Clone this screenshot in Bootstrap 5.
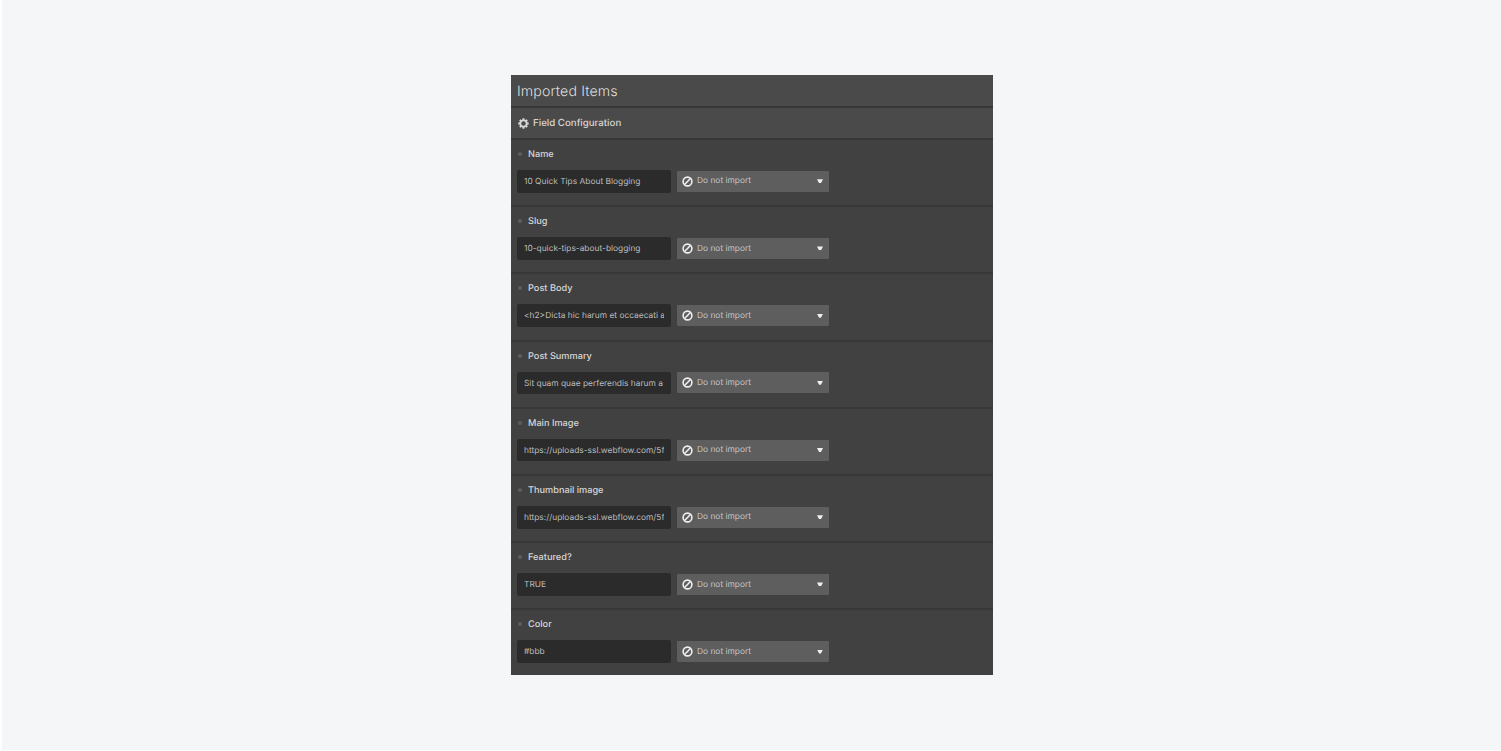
<!DOCTYPE html>
<html lang="en">
<head>
    <meta charset="UTF-8">
    <meta name="viewport" content="width=device-width, initial-scale=1.0">
    <title>Imported Items</title>
    <link href="https://cdn.jsdelivr.net/npm/bootstrap@5.3.0/dist/css/bootstrap.min.css" rel="stylesheet">
    <style>
        html, body { height: 100%; }
        body {
            background: #f5f6f8;
            font-family: Inter, "Liberation Sans", sans-serif;
            text-rendering: geometricPrecision;
            overflow: hidden;
            border-left: 2px solid #fff;
            border-bottom: 1px solid #fff;
        }
        .import-panel {
            width: 482px;
            height: 600px;
            margin: 75px 0 0 509px;
            background: #414141;
            overflow: hidden;
        }
        .panel-title {
            height: 33px;
            padding-left: 6px;
            background: #4a4a4a;
            border-bottom: 2px solid #383838;
            color: #dedede;
            font-size: 14.2px;
            font-weight: 300;
            letter-spacing: .1px;
            line-height: 33px;
        }
        .panel-sub {
            height: 32px;
            padding: 1px 0 0 7px;
            background: #4a4a4a;
            border-bottom: 2px solid #383838;
            color: #d6d6d6;
            font-size: 9.7px;
            font-weight: 500;
        }
        .sub-text { padding-top: 2px; }
        .field-row {
            height: 67.2px;
            padding: 6px 6px 0;
            border-bottom: 2px solid #383838;
        }
        .field-row:last-child { border-bottom: 0; }
        .field-label {
            height: 16px;
            margin-bottom: 8px;
            color: #d6d6d6;
            font-size: 9.2px;
            font-weight: 500;
        }
        .label-text { padding-top: 2px; }
        .label-dot {
            width: 4px;
            height: 4px;
            margin: 0 6px 0 1px;
            border-radius: 50%;
            background: #5e5e5e;
        }
        .sample-box {
            width: 154px;
            height: 22.6px;
            padding: 0 7px;
            background: #2b2b2b;
            border-radius: 2px;
            color: #bdbdbd;
            font-size: 8.4px;
            line-height: 24px;
        }
        .sample-text {
            display: block;
            height: 22.6px;
            white-space: nowrap;
            overflow: hidden;
        }
        .map-select {
            width: 152px;
            height: 21px;
            margin-left: 6px;
            padding: 0 6px 0 5px;
            background: #5e5e5e;
            border-radius: 1px;
            color: #c4c4c4;
            font-size: 8.4px;
        }
        .select-text { margin-left: 4px; padding-top: 1px; }
        .caret-down {
            width: 6px;
            height: 4px;
            background: #f0f0f0;
            clip-path: polygon(0 0, 100% 0, 65% 100%, 35% 100%);
        }
    </style>
</head>
<body>
    <div class="import-panel">
        <div class="panel-title">Imported Items</div>
        <div class="panel-sub d-flex align-items-center">
            <svg width="11" height="11" viewBox="-1 -1 18 18" fill="#d6d6d6"><path fill-rule="evenodd" d="M6.5 0h3l.4 2.2 1.2.5L13 1.4l2.1 2.1-1.3 1.9.5 1.2 2.2.4v3l-2.2.4-.5 1.2 1.3 1.9-2.1 2.1-1.9-1.3-1.2.5-.4 2.2h-3l-.4-2.2-1.2-.5L3 15.6.9 13.5l1.3-1.9-.5-1.2L-.5 10V7l2.2-.4.5-1.2L.9 3.5 3 1.4l1.9 1.3 1.2-.5L6.5 0zM8 4.8a3.7 3.7 0 1 0 0 7.4 3.7 3.7 0 0 0 0-7.4z" transform="translate(0 -.5)"/></svg>
            <span class="sub-text ms-1">Field Configuration</span>
        </div>

        <div id="field-list"></div>
    </div>

    <script>
        let fields = [
            { name: "Name", sample: "10 Quick Tips About Blogging" },
            { name: "Slug", sample: "10-quick-tips-about-blogging" },
            { name: "Post Body", sample: "<h2>Dicta hic harum et occaecati a" },
            { name: "Post Summary", sample: "Sit quam quae perferendis harum a" },
            { name: "Main Image", sample: "https://uploads-ssl.webflow.com/5f" },
            { name: "Thumbnail image", sample: "https://uploads-ssl.webflow.com/5f" },
            { name: "Featured?", sample: "TRUE" },
            { name: "Color", sample: "#bbb" }
        ];

        let fieldList = document.getElementById("field-list");
        fields.forEach(field => {
            let row = document.createElement("div");
            row.classList.add("field-row");
            row.innerHTML = `
                <div class="field-label d-flex align-items-center"><span class="label-dot"></span><span class="label-text">${field.name}</span></div>
                <div class="d-flex align-items-center">
                    <div class="sample-box"><span class="sample-text"></span></div>
                    <div class="map-select d-flex align-items-center">
                        <svg width="11" height="11" viewBox="0 0 12 12" fill="none" stroke="#f0f0f0" stroke-width="1.7"><circle cx="6" cy="6" r="4.8"/><path d="M2.8 9.2l6.4-6.4"/></svg>
                        <span class="select-text flex-grow-1">Do not import</span>
                        <span class="caret-down"></span>
                    </div>
                </div>
            `;
            row.querySelector(".sample-text").textContent = field.sample;
            fieldList.appendChild(row);
        });
    </script>

    <script src="https://cdn.jsdelivr.net/npm/bootstrap@5.3.0/dist/js/bootstrap.bundle.min.js"></script>
</body>
</html>
